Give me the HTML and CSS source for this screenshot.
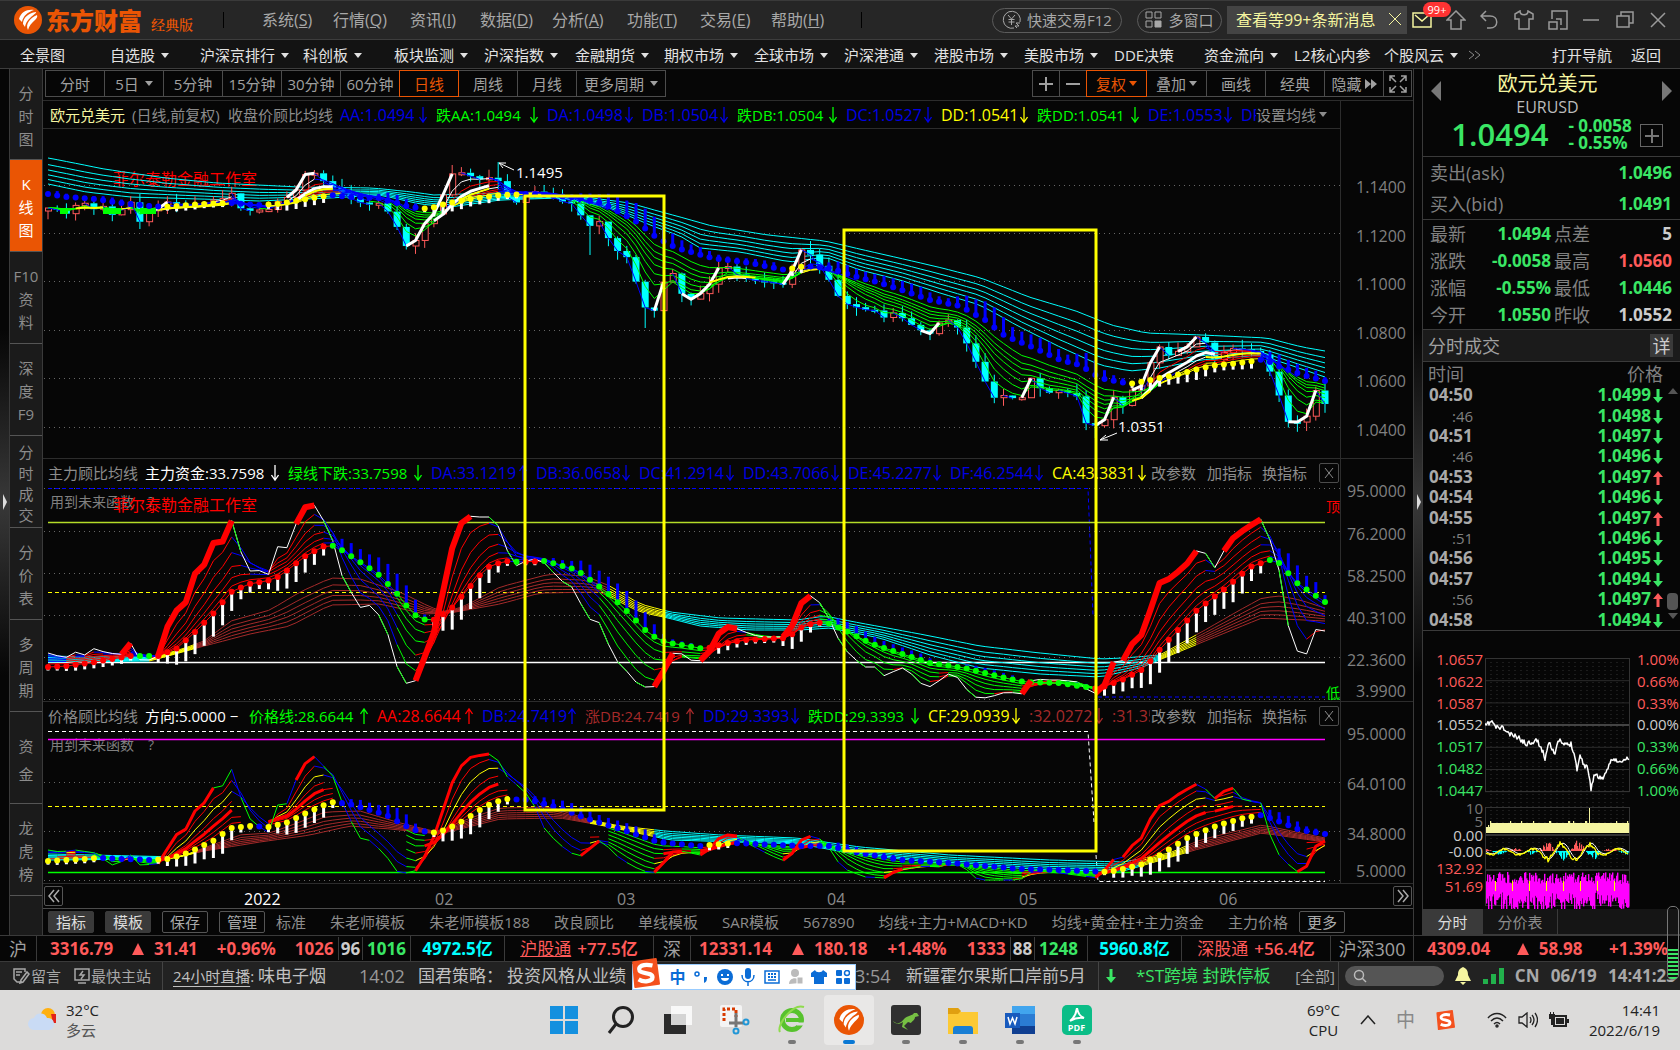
FILE: index.html
```html
<!DOCTYPE html>
<html lang="zh-CN">
<head>
<meta charset="utf-8">
<title>东方财富 经典版</title>
<link rel="stylesheet" href="styles.css">
</head>
<body>
<svg class="defs" aria-hidden="true">
  <symbol id="em" viewBox="0 0 28 28"><circle cx="14" cy="14" r="14" fill="#ea5504"/><path d="M5 13C7 6 13 3 20 4c-6 2-11 6-12 12zM9 18c0-6 5-11 13-12 1 2-9 5-11 15zM14 24c-3-6 2-12 9-15 2 4-7 7-9 15z" fill="#fff"/></symbol>
  <symbol id="dn" viewBox="0 0 8 16"><path d="M4 0v15M0.500 10L4 15L7.500 10" fill="none" stroke="currentColor" stroke-width="1.300"/></symbol>
  <symbol id="up" viewBox="0 0 8 16"><path d="M4 16V1M0.500 6L4 1L7.500 6" fill="none" stroke="currentColor" stroke-width="1.300"/></symbol>
  <symbol id="bdn" viewBox="0 0 10 14"><path d="M3.500 0h3v8H10L5 14L0 8h3.500z" fill="#3ae665"/></symbol>
  <symbol id="bup" viewBox="0 0 10 14"><path d="M3.500 14h3V6H10L5 0L0 6h3.500z" fill="#ff5a5a"/></symbol>
  <symbol id="sg" viewBox="0 0 28 28"><path d="M3 4L24 1L27 24L5 27Z" fill="#f4511e" stroke="#f4511e" stroke-width="2" stroke-linejoin="round"/><path d="M21 7C12 5 7 8 9 12c2 3 12 1 12 6 0 4-8 5-13 2" fill="none" stroke="#fff" stroke-width="4"/></symbol>
</svg>

<header class="titlebar">
  <div class="brand"><svg class="brand-logo"><use href="#em"/></svg><b>东方财富</b><span>经典版</span></div>
  <i class="sep"></i>
  <nav class="menus">
    <button>系统(<u>S</u>)</button><button>行情(<u>Q</u>)</button><button>资讯(<u>I</u>)</button><button>数据(<u>D</u>)</button><button>分析(<u>A</u>)</button><button>功能(<u>T</u>)</button><button>交易(<u>E</u>)</button><button>帮助(<u>H</u>)</button>
  </nav>
  <i class="sep"></i>
  <div class="title-tools">
    <button class="pill pill-trade"><svg width="20" height="20" viewBox="0 0 20 20" fill="none" stroke="currentColor"><path d="M12 18A8.500 8.500 0 1 1 18 12M6 5l3.500 4L13 5M9.500 9v6M6.500 9.500h6M6.500 12h6M18 13h-4l3 3h-4l2 2"/></svg>快速交易F12</button>
    <button class="pill pill-win"><svg width="18" height="18" viewBox="0 0 18 18" fill="none" stroke="currentColor"><path d="M1 1h6v6H1zM10 1h6v6h-6zM1 10h6v6H1z"/><path d="M10 10h6v6h-6z" fill="currentColor"/></svg>多窗口</button>
    <div class="notice"><span>查看等99+条新消息</span><button aria-label="关闭消息"><svg width="14" height="14" viewBox="0 0 14 14" stroke="currentColor"><path d="M1 1l12 12M13 1L1 13"/></svg></button></div>
    <div class="title-icons">
      <button class="mail" aria-label="邮件"><svg width="20" height="18" viewBox="0 0 20 18" fill="none" stroke="#f5f5a0" stroke-width="1.500"><path d="M1 2h18v14H1zM3 4l7 6 7-6"/></svg><span class="badge">99+</span></button>
      <button aria-label="主页"><svg width="20" height="20" viewBox="0 0 20 20"><path d="M10 1L1 10h4v9h10v-9h4z"/></svg></button>
      <button aria-label="后退"><svg width="18" height="20" viewBox="0 0 18 20"><path d="M6 1L1 6l5 5M1 6h9c9 0 9 12 0 12H7"/></svg></button>
      <button aria-label="皮肤"><svg width="20" height="20" viewBox="0 0 20 20"><path d="M6 1L1 4v5h4v10h10V9h4V4l-5-3c0 5-8 5-8 0z"/></svg></button>
      <button aria-label="小窗"><svg width="20" height="20" viewBox="0 0 20 20"><path d="M4 9V1h15v18h-7M1 12h8v7H1zM8 9h5v6"/></svg></button>
      <button aria-label="最小化"><svg width="18" height="20" viewBox="0 0 18 20"><path d="M1 10h16"/></svg></button>
      <button aria-label="还原"><svg width="18" height="18" viewBox="0 0 18 18"><path d="M1 5h12v11H1zM5 5V1h12v11h-4"/></svg></button>
      <button aria-label="关闭"><svg width="16" height="16" viewBox="0 0 16 16"><path d="M1 1l14 14M15 1L1 15"/></svg></button>
    </div>
  </div>
</header>

<nav class="mainnav">
  <a href="#">全景图</a><a href="#" class="car">自选股</a><a href="#" class="car">沪深京排行</a><a href="#" class="car">科创板</a><a href="#" class="car">板块监测</a><a href="#" class="car">沪深指数</a><a href="#" class="car">金融期货</a><a href="#" class="car">期权市场</a><a href="#" class="car">全球市场</a><a href="#" class="car">沪深港通</a><a href="#" class="car">港股市场</a><a href="#" class="car">美股市场</a><a href="#">DDE决策</a><a href="#" class="car">资金流向</a><a href="#">L2核心内参</a><a href="#" class="car">个股风云</a><a href="#" class="dim" aria-label="更多"><svg width="13" height="10" viewBox="0 0 13 10" fill="none" stroke="currentColor"><path d="M1 1l5 4-5 4M7 1l5 4-5 4"/></svg></a><span></span><a href="#">打开导航</a><a href="#">返回</a>
</nav>

<main class="workspace">
  <div class="gutter"><i></i></div>
  <nav class="side">
    <a href="#">分<br>时<br>图</a><a href="#" class="on">K<br>线<br>图</a><a href="#">F10<br>资<br>料</a><a href="#">深<br>度<br>F9</a><a href="#" class="four">分<br>时<br>成<br>交</a><a href="#">分<br>价<br>表</a><a href="#">多<br>周<br>期</a><a href="#" class="two">资<br>金</a><a href="#">龙<br>虎<br>榜</a>
  </nav>

  <section class="charts">
    <div class="toolbar">
      <div class="group">
        <button>分时</button><button class="car">5日</button><button>5分钟</button><button>15分钟</button><button>30分钟</button><button>60分钟</button><button class="on">日线</button><button>周线</button><button>月线</button><button class="car wide">更多周期</button>
      </div>
      <div class="group right">
        <button aria-label="放大"><svg width="16" height="16" viewBox="0 0 16 16"><path d="M8 1v14M1 8h14" stroke="currentColor" stroke-width="2"/></svg></button><button aria-label="缩小"><svg width="16" height="16" viewBox="0 0 16 16"><path d="M1 8h14" stroke="currentColor" stroke-width="2"/></svg></button><button class="on car">复权</button><button class="car">叠加</button><button>画线</button><button>经典</button><button>隐藏<svg width="12" height="10" viewBox="0 0 12 10"><path d="M0 0l6 5-6 5zM6 0l6 5-6 5z" fill="currentColor"/></svg></button><button aria-label="全屏"><svg width="18" height="18" viewBox="0 0 18 18" fill="none" stroke="currentColor" stroke-width="1.500"><path d="M1 6V1h5M12 1h5v5M17 12v5h-5M6 17H1v-5M1 1l6 6M17 1l-6 6M17 17l-6-6M1 17l6-6"/></svg></button>
      </div>
    </div>

    <section class="panel">
      <div class="plotcol">
        <div class="head line">
          <div class="readout r1"><span class="c-pale">欧元兑美元</span><span>(日线,前复权)</span><span>收盘价顾比均线</span><span class="c-blue n">AA:1.0494<svg><use href="#dn"/></svg></span><span class="c-green">跌AA:1.0494<svg><use href="#dn"/></svg></span><span class="c-blue n">DA:1.0498<svg><use href="#dn"/></svg></span><span class="c-blue n">DB:1.0504<svg><use href="#dn"/></svg></span><span class="c-green">跌DB:1.0504<svg><use href="#dn"/></svg></span><span class="c-blue n">DC:1.0527<svg><use href="#dn"/></svg></span><span class="c-yellow n">DD:1.0541<svg><use href="#dn"/></svg></span><span class="c-green">跌DD:1.0541<svg><use href="#dn"/></svg></span><span class="c-blue n">DE:1.0553<svg><use href="#dn"/></svg></span><span class="c-blue n">DF</span></div>
          <button class="car setma">设置均线</button>
        </div>
        <svg class="plot" id="plot-price"></svg>
      </div>
      <ol class="axis a1"><li>1.1400</li><li>1.1200</li><li>1.1000</li><li>1.0800</li><li>1.0600</li><li>1.0400</li></ol>
    </section>

    <section class="panel">
      <div class="plotcol">
        <div class="head">
          <div class="readout r2"><span>主力顾比均线</span><span class="c-white">主力资金:33.7598<svg><use href="#dn"/></svg></span><span class="c-green">绿线下跌:33.7598<svg><use href="#dn"/></svg></span><span class="c-blue n">DA:33.1219<svg><use href="#up"/></svg></span><span class="c-blue n">DB:36.0658<svg><use href="#dn"/></svg></span><span class="c-blue n">DC:41.2914<svg><use href="#dn"/></svg></span><span class="c-blue n">DD:43.7066<svg><use href="#dn"/></svg></span><span class="c-blue n">DE:45.2277<svg><use href="#dn"/></svg></span><span class="c-blue n">DF:46.2544<svg><use href="#dn"/></svg></span><span class="c-yellow n">CA:43.3831<svg><use href="#dn"/></svg></span></div>
          <div class="acts"><button>改参数</button><button>加指标</button><button>换指标</button><button class="x" aria-label="关闭"><svg width="10" height="12" viewBox="0 0 10 12" stroke="currentColor"><path d="M1 1l8 10M9 1L1 11"/></svg></button></div>
        </div>
        <svg class="plot" id="plot-main"></svg>
      </div>
      <ol class="axis a2"><li>95.0000</li><li>76.2000</li><li>58.2500</li><li>40.3100</li><li>22.3600</li><li>3.9900</li></ol>
    </section>

    <section class="panel">
      <div class="plotcol">
        <div class="head">
          <div class="readout r3"><span>价格顾比均线</span><span class="c-white">方向:5.0000 −</span><span class="c-green">价格线:28.6644<svg><use href="#up"/></svg></span><span class="c-red n">AA:28.6644<svg><use href="#up"/></svg></span><span class="c-blue n">DB:24.7419<svg><use href="#up"/></svg></span><span class="c-brown">涨DB:24.7419<svg><use href="#up"/></svg></span><span class="c-blue n">DD:29.3393<svg><use href="#dn"/></svg></span><span class="c-green">跌DD:29.3393<svg><use href="#dn"/></svg></span><span class="c-yellow n">CF:29.0939<svg><use href="#dn"/></svg></span><span class="c-brown n">:32.0272<svg><use href="#dn"/></svg></span><span class="c-brown n">:31.35</span></div>
          <div class="acts"><button>改参数</button><button>加指标</button><button>换指标</button><button class="x" aria-label="关闭"><svg width="10" height="12" viewBox="0 0 10 12" stroke="currentColor"><path d="M1 1l8 10M9 1L1 11"/></svg></button></div>
        </div>
        <svg class="plot" id="plot-value"></svg>
      </div>
      <ol class="axis a3"><li>95.0000</li><li>64.0100</li><li>34.8000</li><li>5.0000</li></ol>
    </section>

    <div class="timeline">
      <button aria-label="向前"><svg width="14" height="14" viewBox="0 0 14 14"><path d="M7 1L2 7l5 6M12 1L7 7l5 6" fill="none" stroke="currentColor" stroke-width="1.500"/></svg></button>
      <ol><li class="c-white">2022</li><li>02</li><li>03</li><li>04</li><li>05</li><li>06</li></ol>
      <button aria-label="向后"><svg width="14" height="14" viewBox="0 0 14 14"><path d="M2 1l5 6-5 6M7 1l5 6-5 6" fill="none" stroke="currentColor" stroke-width="1.500"/></svg></button>
    </div>

    <div class="templates">
      <div class="boxes"><button class="fill">指标</button><button class="fill">模板</button><button>保存</button><button>管理</button></div>
      <div class="names"><button>标准</button><button>朱老师模板</button><button>朱老师模板188</button><button>改良顾比</button><button>单线模板</button><button>SAR模板</button><button>567890</button><button>均线+主力+MACD+KD</button><button>均线+黄金柱+主力资金</button><button>主力价格</button></div>
      <div class="boxes"><button>更多</button></div>
    </div>
    <svg class="marks" id="marks"></svg>
  </section>

  <div class="gutter right"><i></i></div>

  <aside class="quote">
    <div class="q-head">
      <button class="tri-l" aria-label="上一个"></button>
      <div class="q-mid">
        <h1>欧元兑美元</h1><p>EURUSD</p>
        <div class="q-price"><strong>1.0494</strong><span>- 0.0058<br>- 0.55%</span></div>
      </div>
      <div class="q-side"><button class="tri-r" aria-label="下一个"></button><button class="plus" aria-label="添加"><svg width="14" height="14" viewBox="0 0 14 14"><path d="M7 0v14M0 7h14" stroke="#777" stroke-width="2"/></svg></button></div>
    </div>
    <dl class="ask"><dt>卖出(ask)</dt><dd class="g">1.0496</dd><dt>买入(bid)</dt><dd class="g">1.0491</dd></dl>
    <dl class="stats"><dt>最新</dt><dd class="g">1.0494</dd><dt>点差</dt><dd>5</dd><dt>涨跌</dt><dd class="g">-0.0058</dd><dt>最高</dt><dd class="r">1.0560</dd><dt>涨幅</dt><dd class="g">-0.55%</dd><dt>最低</dt><dd class="g">1.0446</dd><dt>今开</dt><dd class="g">1.0550</dd><dt>昨收</dt><dd>1.0552</dd></dl>
    <div class="q-title"><h2>分时成交</h2><button>详</button></div>
    <div class="ticks">
      <table>
        <thead><tr><th>时间</th><th>价格</th></tr></thead>
        <tbody>
          <tr><td>04:50</td><td>1.0499<svg><use href="#bdn"/></svg></td></tr>
          <tr><td class="s">:46</td><td>1.0498<svg><use href="#bdn"/></svg></td></tr>
          <tr><td>04:51</td><td>1.0497<svg><use href="#bdn"/></svg></td></tr>
          <tr><td class="s">:46</td><td>1.0496<svg><use href="#bdn"/></svg></td></tr>
          <tr><td>04:53</td><td>1.0497<svg><use href="#bup"/></svg></td></tr>
          <tr><td>04:54</td><td>1.0496<svg><use href="#bdn"/></svg></td></tr>
          <tr><td>04:55</td><td>1.0497<svg><use href="#bup"/></svg></td></tr>
          <tr><td class="s">:51</td><td>1.0496<svg><use href="#bdn"/></svg></td></tr>
          <tr><td>04:56</td><td>1.0495<svg><use href="#bdn"/></svg></td></tr>
          <tr><td>04:57</td><td>1.0494<svg><use href="#bdn"/></svg></td></tr>
          <tr><td class="s">:56</td><td>1.0497<svg><use href="#bup"/></svg></td></tr>
          <tr><td>04:58</td><td>1.0494<svg><use href="#bdn"/></svg></td></tr>
        </tbody>
      </table>
      <div class="bar"><i class="bu"></i><span></span><i class="bt"></i><i class="bd"></i></div>
    </div>
    <div class="mini">
      <ol><li class="r">1.0657</li><li class="r">1.0622</li><li class="r">1.0587</li><li>1.0552</li><li class="g">1.0517</li><li class="g">1.0482</li><li class="g">1.0447</li><li class="d">10</li><li class="d">5</li><li>0.00</li><li>-0.00</li><li class="r">132.92</li><li class="r">51.69</li></ol>
      <svg id="plot-mini"></svg>
      <ol class="pct"><li class="r">1.00%</li><li class="r">0.66%</li><li class="r">0.33%</li><li>0.00%</li><li class="g">0.33%</li><li class="g">0.66%</li><li class="g">1.00%</li></ol>
    </div>
    <div class="q-tabs"><button class="on">分时</button><button>分价表</button><i class="meter"></i></div>
  </aside>
</main>

<section class="ticker">
  <div class="lab">沪</div>
  <div class="idx"><b>3316.79</b><b class="tri">31.41</b><b>+0.96%</b><b class="cnt">1026<i>96</i><em>1016</em></b></div>
  <div class="amt">4972.5亿</div>
  <div class="net"><u>沪股通</u> <b>+77.5亿</b></div>
  <div class="lab">深</div>
  <div class="idx"><b>12331.14</b><b class="tri">180.18</b><b>+1.48%</b><b class="cnt">1333<i>88</i><em>1248</em></b></div>
  <div class="amt">5960.8亿</div>
  <div class="net">深股通 <b>+56.4亿</b></div>
  <div class="lab">沪深300</div>
  <div class="idx"><b>4309.04</b><b class="tri">58.98</b><b>+1.39%</b></div>
</section>

<section class="status">
  <div class="tools">
    <button><svg width="17" height="16" viewBox="0 0 17 16" fill="none" stroke="currentColor" stroke-width="1.500"><path d="M9 14H4L1 11V1h11v3M3 4h6M3 7h4M8 12l6-8 2 2-6 8-3 1z"/></svg>留言</button>
    <button><svg width="16" height="16" viewBox="0 0 16 16" fill="none" stroke="currentColor" stroke-width="1.500"><path d="M1 1h14v11H1zM4 15h8M9 3L6 7h4l-3 4"/></svg>最快主站</button>
  </div>
  <div class="news">
    <span class="live"><a href="#">24小时直播</a>:</span><span class="cut"><a href="#">味电子烟</a></span><time>14:02</time><a href="#">国君策略：</a><a href="#" class="lead">投资风格从业绩</a><time class="late">3:54</time><a href="#">新疆霍尔果斯口岸前5月</a>
  </div>
  <div class="alert"><svg width="10" height="16"><use href="#bdn"/></svg><a href="#">*ST跨境 封跌停板</a><button>[全部]</button></div>
  <div class="sys">
    <label class="find"><svg width="14" height="14" viewBox="0 0 14 14" fill="none" stroke="#bbb" stroke-width="1.500"><circle cx="6" cy="6" r="4.500"/><path d="M9 9l4 4"/></svg><input type="text" aria-label="搜索"></label>
    <svg width="16" height="18" viewBox="0 0 16 18"><path d="M8 0c4 2 5 4 5 8l3 6H0l3-6c0-4 1-6 5-8zM5 15h6l-3 3z" fill="#f5f5a0"/></svg>
    <svg width="21" height="16" viewBox="0 0 21 16" fill="#22b14c"><path d="M0 11h5v5H0zM8 6h5v10H8zM16 0h5v16h-5z"/></svg>
    <b>CN</b><b>06/19</b><b>14:41:23</b>
  </div>
  <div class="ime">
    <svg width="32" height="30"><use href="#sg"/></svg><b>中</b>
    <svg width="14" height="16" viewBox="0 0 14 16"><circle cx="3" cy="5" r="2" fill="none" stroke="currentColor" stroke-width="1.500"/><path d="M10 8h3c0 4-1 5-3 6z" fill="currentColor"/></svg>
    <svg width="16" height="16" viewBox="0 0 16 16"><circle cx="8" cy="8" r="8" fill="currentColor"/><path d="M4 5h2v2H4zM10 5h2v2h-2zM4 9h8c0 4-8 4-8 0z" fill="#fff"/></svg>
    <svg width="14" height="18" viewBox="0 0 14 18"><rect x="4" width="6" height="11" rx="3" fill="currentColor"/><path d="M1 7c0 9 12 9 12 0M7 14v4" fill="none" stroke="currentColor" stroke-width="1.500"/></svg>
    <svg width="16" height="14" viewBox="0 0 16 14" fill="none" stroke="currentColor" stroke-width="1.500"><path d="M1 1h14v12H1zM4 10h8"/><path d="M4 4h9M4 7h9" stroke-dasharray="2 1" stroke-width="2"/></svg>
    <svg width="14" height="16" viewBox="0 0 14 16" fill="#bbb"><circle cx="6" cy="4" r="4"/><path d="M0 15c0-7 10-8 11-1z"/><path d="M8 8h6v7H8z" stroke="#fff"/></svg>
    <svg width="16" height="14" viewBox="0 0 16 14" fill="currentColor"><path d="M4 0L0 3v4h3v7h10V7h3V3l-4-3c-1 3-7 3-8 0z"/></svg>
    <svg width="14" height="14" viewBox="0 0 14 14" fill="currentColor"><rect width="6" height="6" rx="1"/><circle cx="11" cy="3" r="2.500" fill="none" stroke="currentColor" stroke-width="1.500"/><rect y="8" width="6" height="6" rx="1"/><rect x="8" y="8" width="6" height="6" rx="1"/></svg>
  </div>
</section>

<footer class="taskbar">
  <div class="weather">
    <svg width="30" height="24" viewBox="0 0 30 24"><circle cx="21" cy="7" r="7" fill="#ffb010"/><path d="M24 6h5v9h-3z" fill="#e2231a"/><path d="M7 22a6 6 0 0 1 0-12 7 7 0 0 1 13 0 6 6 0 0 1 2 12z" fill="#c9dbf5"/></svg>
    <p>32°C<br><span>多云</span></p>
  </div>
  <div class="apps">
    <button aria-label="开始"><svg width="28" height="28" viewBox="0 0 28 28"><path d="M0 0h13v13H0zM15 0h13v13H15zM0 15h13v13H0zM15 15h13v13H15z" fill="#1490df"/></svg></button>
    <button aria-label="搜索"><svg width="28" height="28" viewBox="0 0 28 28" fill="none" stroke="#222" stroke-width="3"><circle cx="16" cy="11" r="9.500"/><path d="M9 18l-7 9"/></svg></button>
    <button aria-label="任务视图"><svg width="30" height="28" viewBox="0 0 30 28"><path d="M1 8h22v20H1z" fill="#2b2b2b"/><path d="M8 0h21v19H8z" fill="#fff" fill-opacity=".8"/></svg></button>
    <button aria-label="截图"><svg width="30" height="30" viewBox="0 0 30 30" fill="none"><rect width="22" height="22" rx="2" fill="#f4f4f4"/><path d="M4 16V4h12v8" stroke="#d83b01" stroke-width="3" stroke-dasharray="3 2"/><path d="M9 18h14M16 8v14" stroke="#777" stroke-width="3"/><circle cx="26" cy="17" r="2.500" stroke="#2196d6" stroke-width="2"/><circle cx="16" cy="26" r="2.500" stroke="#2196d6" stroke-width="2"/></svg></button>
    <button class="run" aria-label="浏览器"><svg width="28" height="30" viewBox="0 0 28 30" fill="none"><circle cx="14" cy="15" r="9.500" stroke="#57c22d" stroke-width="5"/><path d="M8 15h15" stroke="#57c22d" stroke-width="4"/><path d="M19 19h8" stroke="#dcdcdc" stroke-width="3"/><path d="M2 27C-2 20 15-2 26 2" stroke="#8fdb4c" stroke-width="2"/></svg></button>
    <button class="run active" aria-label="东方财富"><svg width="30" height="30"><use href="#em"/></svg></button>
    <button class="run" aria-label="袋鼠"><svg width="30" height="30" viewBox="0 0 30 30"><rect width="30" height="30" rx="3" fill="#303030"/><path d="M2 16c6 5 8 1 12-3 4-3 7-2 9-5l3 0 2 3-4 1c0 3-3 4-4 6l-3-1-4 4 4 4-6-3 1-5c-4 3-8 2-10-1z" fill="#76c043"/></svg></button>
    <button class="run" aria-label="文件夹"><svg width="30" height="28" viewBox="0 0 30 28"><path d="M0 2h10l3 4h17v22H0z" fill="#fcc934"/><path d="M0 2h10l3 3-3 3H0z" fill="#e0a010"/><path d="M5 28v-5q0-3 3-3h14q3 0 3 3v5z" fill="#1a7fd4"/></svg></button>
    <button class="run" aria-label="Word"><svg width="30" height="28" viewBox="0 0 30 28"><path d="M7 0h23v28H7z" fill="#2b7cd3"/><path d="M7 0h23v8H7z" fill="#41a5ee"/><path d="M7 20h23v8H7z" fill="#103f91"/><path d="M0 7h15v15H0z" fill="#185abd"/><path d="M3 11l2 7 2.500-6 2.500 6 2-7" fill="none" stroke="#fff" stroke-width="1.500"/></svg></button>
    <button class="run pdf" aria-label="PDF"><svg width="16" height="14" viewBox="0 0 16 14" fill="none" stroke="#fff" stroke-width="2"><path d="M8 0c1 6 3 8 7 10-5-1-9 0-14 3 4-3 6-6 7-13z"/></svg><span>PDF</span></button>
  </div>
  <div class="tray">
    <p class="temp">69°C<br>CPU</p>
    <svg width="16" height="10" viewBox="0 0 16 10" fill="none" stroke="#222" stroke-width="1.500"><path d="M1 9l7-8 7 8"/></svg>
    <span class="zh">中</span>
    <svg width="20" height="20"><use href="#sg"/></svg>
    <div class="net3">
      <svg width="20" height="16" viewBox="0 0 20 16" fill="none" stroke="#222" stroke-width="1.500"><path d="M1 6c5-6 13-6 18 0M4 9c4-4 8-4 12 0M7 12c2-2 4-2 6 0"/><circle cx="10" cy="14" r="1"/></svg>
      <svg width="20" height="16" viewBox="0 0 20 16" fill="none" stroke="#222" stroke-width="1.300"><path d="M1 5h3l5-4v14l-5-4H1zM12 5q2 3 0 6M14 3q4 5 0 10M17 1q5 7 0 14"/></svg>
      <svg width="20" height="16" viewBox="0 0 20 16"><path d="M5 4h12v10H5z" fill="none" stroke="#222" stroke-width="2"/><path d="M7 6h8v6H7zM18 7h2v4h-2zM0 2h6v5H0zM1 0h1v2H1zM4 0h1v2H4zM2 7h2v6H2z" fill="#222"/></svg>
    </div>
    <p class="clock">14:41<br>2022/6/19</p>
  </div>
</footer>
<script src="charts.js"></script>
</body>
</html>
```
FILE: styles.css
```css
*{box-sizing:border-box}
body{margin:0;height:100vh;min-height:980px;display:grid;grid-template-columns:minmax(0,1fr);grid-template-rows:40px 29px minmax(0,1fr) 27px 28px 60px;background:#060606;color:#8c8c8c;font:15px/20px "Open Sans","Noto Sans CJK SC",sans-serif;overflow-x:hidden;white-space:nowrap}
button{font:inherit;color:inherit;background:none;border:0;padding:0;margin:0;white-space:nowrap}
a{color:inherit;text-decoration:none}
ol,dl,p,h1,h2,dd{margin:0;padding:0;list-style:none}
i,em{font-style:normal}
svg{flex:none}
.defs{position:absolute;width:0;height:0}
.c-pale{color:#f5f5a0}.c-blue{color:#0000e6}.c-green{color:#00ff00}.c-yellow{color:#ffff00}.c-white{color:#fff}.c-red{color:#ff0000}.c-brown{color:#a52a2a}
.g{color:#3ae665}.r{color:#ff5a5a}.d{color:#777}
.car::after{content:"";border:4px solid transparent;border-top:5px solid currentColor;border-bottom:0}

.titlebar{display:flex;align-items:center;background:#262626;border-top:1px solid #3a3a3a;border-bottom:1px solid #3d3d3d;color:#a8a8a8}
.brand{display:flex;align-items:center;width:223px;padding-left:14px;color:#ea5504}
.brand-logo{width:28px;height:28px}
.brand b{font:900 24px/30px "Noto Sans CJK SC",sans-serif;margin-left:4px}
.brand span{font:600 14px/20px "Noto Serif CJK SC","Noto Sans CJK SC",serif;margin:8px 0 0 9px}
.sep{width:1px;height:16px;background:#000}
.menus{display:grid;grid-template-columns:71px 77px 70px 72px 75px 73px 71px 90px;padding-left:38px;font-size:16px}
.menus button{text-align:left}
.title-tools{flex:1;display:flex;align-items:center;justify-content:flex-end}
.pill{height:25px;border:1px solid #5c5c5c;border-radius:13px;display:flex;align-items:center;justify-content:center;gap:5px}
.pill-trade{width:130px;margin-right:15px}
.pill-win{width:85px;margin-right:5px}
.notice{width:180px;height:28px;background:#444;color:#f5f5a0;display:flex;align-items:center;justify-content:space-between;padding:0 5px 0 9px;font-size:16px}
.title-icons{display:grid;grid-template-columns:repeat(8,34px);width:273px;align-items:center;padding-left:5px}
.title-icons button{display:flex;align-items:center}
.title-icons button:not(.mail) svg{fill:none;stroke:#9a9a9a;stroke-width:1.5}
.mail{position:relative}
.badge{position:absolute;left:11px;top:-9px;width:28px;height:15px;border-radius:8px;background:#f33;color:#fff;font-size:11px;line-height:15px;text-align:center}

.mainnav{display:grid;grid-template-columns:90px 90px 103px 91px 90px 91px 89px 90px 90px 90px 90px 90px 90px 90px 90px 84px 24px 1fr 79px 49px;align-items:center;background:#131313;border-bottom:1px solid #3d3d3d;padding:2px 0 0 20px;color:#e2e2e2}
.mainnav a{display:flex;align-items:center;gap:6px}
.mainnav .dim{color:#888}

.workspace{display:grid;grid-template-columns:10px 33px minmax(0,1fr) 10px 257px;grid-template-rows:minmax(0,1fr);min-height:0}
.gutter{background:linear-gradient(#060606 30%,#383838 50%,#060606 70%);display:flex;align-items:center;border-right:1px solid #3a3a3a}
.gutter i{margin-left:3px;border:8px solid transparent;border-left:4px solid #ddd;border-right:0}
.gutter.right{border-left:1px solid #3a3a3a}
.side{background:#1b1b1b;border-right:1px solid #3a3a3a;display:grid;grid-template-rows:91px repeat(8,92px) 1fr;text-align:center;line-height:23px}
.side a{display:flex;align-items:center;justify-content:center;border-bottom:1px solid #555;padding-top:4px}
.side .on{background:#ea5504;color:#fff}
.side .four{line-height:21px}
.side .two{line-height:28px}

.charts{position:relative;display:grid;grid-template-columns:minmax(0,1fr);grid-template-rows:32px minmax(0,358fr) minmax(0,243fr) minmax(0,182fr) 25px 26px}
.toolbar{display:flex;justify-content:space-between;padding:1px 1px 3px 3px;border-bottom:1px solid #2c2c2c}
.group{display:grid;grid-template-columns:repeat(9,59px) 89px;color:#a0a0a0}
.group.right{grid-template-columns:27px 27px 60px 60px 59px 59px 59px 28px}
.group button{border:1px solid #4c4c4c;margin-left:-1px;display:flex;align-items:center;justify-content:center;gap:6px}
.group .on{border-color:#ea5504;color:#ea5504;position:relative}
.group.right button{gap:3px}
.panel{display:grid;grid-template-columns:minmax(0,1fr) 73px;grid-template-rows:minmax(0,1fr);border-bottom:1px solid #2c2c2c;min-height:0}
.plotcol{display:grid;grid-template-columns:minmax(0,1fr);grid-template-rows:28px minmax(0,1fr);min-width:0;min-height:0}
.head{display:flex;align-items:center;padding-left:5px;min-width:0}
.head.line{border-bottom:1px solid #2c2c2c;padding-left:7px}
.readout{flex:1;min-width:0;overflow:hidden;display:grid;align-items:center}
.readout span{display:flex;align-items:center;justify-content:space-between;padding-right:9px}
.readout .n{font-size:16px}
.readout svg{width:8px;height:18px}
.r1{grid-template-columns:82px 96px 112px 96px 111px 95px 95px 109px 95px 96px 111px 93px 1fr}
.r2{grid-template-columns:97px 143px 143px 105px 103px 104px 105px 102px 102px 98px}
.r2 span:last-child{padding-right:4px}
.r3{grid-template-columns:97px 104px 128px 105px 103px 118px 105px 120px 101px 83px 1fr}
.setma{display:flex;align-items:center;gap:3px;width:84px}
.acts{display:grid;grid-template-columns:56px 55px 57px 20px;padding:0 1px}
.acts button{text-align:left}
.acts .x{height:20px;border:1px solid #4c4c4c;border-radius:2px;display:flex;align-items:center;justify-content:center}
.plot{display:block;width:100%;height:100%;min-height:0}
.axis{display:grid;border-left:1px solid #2c2c2c;font-size:16px;align-items:center;padding-right:7px;text-align:right;color:#808080}
.a1{padding:62px 7px 4px 0;grid-template-rows:repeat(6,1fr)}
.a2{padding-top:10px;grid-template-rows:43fr 43fr 42fr 42fr 42fr 20fr}
.a3{padding-top:6px;grid-template-rows:51fr 50fr 49fr 25fr}
.timeline{display:flex;align-items:center;justify-content:space-between;border-bottom:1px solid #4c4c4c;padding:0 1px}
.timeline ol{flex:1;display:grid;grid-template-columns:191fr 182fr 210fr 192fr 200fr 174fr;padding-left:181px;padding-top:6px;font-size:16px;line-height:20px}
.timeline button{width:19px;height:20px;border:1px solid #555;border-radius:2px;display:flex;align-items:center;justify-content:center;color:#aaa}
.templates{display:flex;align-items:center;gap:11px;padding-left:5px}
.boxes{display:flex;gap:11px}
.boxes button{width:46px;height:22px;line-height:20px;border:1px solid #555;border-radius:2px;color:#aaa}
.boxes .fill{background:#3a3a3a;border-color:#3a3a3a;color:#ddd}
.names{display:flex;width:1012px;justify-content:space-between}
.marks{position:absolute;left:0;top:0;width:100%;height:100%;pointer-events:none}

.quote{display:grid;grid-template-columns:minmax(0,1fr);grid-template-rows:88px 63px 110px 32px 269px minmax(0,1fr) 26px}
.q-head{display:grid;grid-template-columns:18px 1fr 40px;padding:2px 6px 0 8px;border-bottom:1px solid #3a3a3a;align-items:start}
.tri-l,.tri-r{width:10px;height:20px;border:10px solid transparent;border-right:10px solid #777;border-left:0;margin-top:10px}
.tri-r{border-left:10px solid #777;border-right:0;margin-left:28px}
.q-mid{display:grid;justify-items:center}
.q-mid h1{font-size:20px;font-weight:400;line-height:26px;color:#f5f5a0;margin-left:12px}
.q-mid p{font-size:16px;line-height:20px;color:#bbb;margin-left:12px}
.q-price{display:flex;align-items:center;gap:20px;color:#3ae665;height:34px}
.q-price strong{font-size:31px;font-weight:600;line-height:34px}
.q-price span{font-size:17px;font-weight:700;line-height:17px}
.q-side{display:grid}
.plus{width:23px;height:23px;border:1px solid #666;margin:23px 0 0 6px;display:flex;align-items:center;justify-content:center}
.ask,.stats{display:grid;font-size:18px;border-bottom:1px solid #3a3a3a;align-items:center;color:#808080}
.ask{grid-template-columns:1fr 1fr;padding:0 8px 0 7px}
.stats{grid-template-columns:44px 77px 44px 1fr;padding:0 8px 0 7px}
.stats dt:nth-of-type(even){padding-left:3px}
.quote dd{font-size:17px;font-weight:700;text-align:right}
.stats dd:not(.g):not(.r){color:#ccc}
.q-title{background:#1b1b1b;border-bottom:1px solid #3a3a3a;display:flex;align-items:center;justify-content:space-between;padding:0 7px 0 5px}
.q-title h2{font-size:18px;font-weight:400;color:#a0a0a0}
.q-title button{font-size:18px;width:23px;height:23px;line-height:22px;background:#3a3a3a;color:#ccc}
.ticks{display:grid;grid-template-columns:1fr 17px;border-bottom:1px solid #3a3a3a}
.ticks table{border-collapse:collapse;width:100%;height:268px}
.ticks th{font-size:18px;font-weight:400;text-align:left;padding:0 0 0 5px;line-height:22px;height:23px;color:#808080}
.ticks th:last-child{text-align:right}
.ticks td{padding:0 0 0 6px;font-size:17px;font-weight:700;color:#aaa;line-height:20px}
.ticks td:last-child{text-align:right;color:#3ae665}
.ticks td.s{font-weight:400;font-size:15px;color:#808080;padding-left:29px}
.ticks td svg{width:10px;height:14px;margin-left:2px;vertical-align:-2px}
.bar{display:grid;grid-template-rows:7px 1fr 17px 20px;padding:25px 2px 0 4px;justify-items:center}
.bu{border:5px solid transparent;border-bottom:6px solid #555;border-top:0}
.bt{width:11px;background:#555;border-radius:4px}
.bd{border:5px solid transparent;border-top:6px solid #555;border-bottom:0;align-self:start;margin-top:3px}
.mini{display:grid;grid-template-columns:60px 146px 46px;grid-template-rows:minmax(0,1fr);column-gap:2px}
.mini ol{display:grid;grid-template-rows:repeat(7,22fr) 14fr 13fr 15fr 17fr 18fr 17fr 15fr;padding-top:17px;text-align:right;color:#ccc;align-items:center;line-height:12px}
.mini svg{width:100%;height:100%}
.mini .d{color:#777}.mini .r{color:#ff5a5a}.mini .g{color:#3ae665}
.q-tabs{display:flex;background:#151515;border-bottom:1px solid #3a3a3a;position:relative}
.q-tabs button{width:75px;border-right:1px solid #3a3a3a}
.q-tabs .on{width:60px;background:#3a3a3a;color:#ddd}
.meter{position:absolute;right:1px;top:-3px;z-index:2;width:12px;height:74px;border:1px solid #777;border-radius:5px;background:repeating-linear-gradient(#3ae665 0 2px,#111 2px 4px) 0 42px/100% 30px no-repeat}

.ticker{display:flex;border-top:1px solid #3a3a3a;border-bottom:1px solid #3a3a3a;color:#ff5a5a;font-size:17px;line-height:24px}
.ticker>div{border-right:1px solid #3a3a3a;display:flex;align-items:center;justify-content:center}
.ticker>.idx{justify-content:space-between;padding:0 4px 0 13px;width:374px}
.ticker>.idx:nth-of-type(6){width:397px;padding:0 9px 0 8px}
.ticker>.idx:last-child{flex:1;border:0;padding-right:12px}
.ticker>.lab{width:37px;color:#a0a0a0;font-size:18px}
.ticker>.lab:nth-of-type(9){width:83px}
.ticker>.amt{width:94px;color:#00ffff;font-weight:700}
.ticker>.net{width:149px;gap:6px;font-size:17px}
.net b{font-weight:600}
.tri{display:flex;align-items:center;gap:10px}
.tri::before{content:"";border:6px solid transparent;border-bottom:12px solid #ff5a5a;border-top:0}
.cnt i{color:#ccc;border:solid #3a3a3a;border-width:0 1px;padding:0 2px;margin:0 4px}
.cnt em{color:#3ae665}

.status{display:flex;background:#222;position:relative;color:#a8a8a8;align-items:center}
.tools{display:flex;gap:13px;width:163px;padding-left:13px;border-right:1px solid #444;line-height:28px}
.tools button{display:flex;align-items:center;gap:1px}
.news{display:flex;align-items:center;flex:1;min-width:0;overflow:hidden;font-size:17px;color:#c0c0c0;padding-left:10px;line-height:28px}
.live{font-size:15px;width:85px}
.live a{text-decoration:underline;text-underline-offset:4px}
.cut{width:68px;overflow:hidden;display:flex;justify-content:flex-end;margin-right:33px}
.news time{width:59px;font-size:18px;color:#999}
.news .lead{margin-left:4px;width:348px}
.news .late{width:51px}
.alert{display:flex;align-items:center;width:241px;border:solid #444;border-width:0 1px;padding-left:7px;line-height:28px}
.alert a{color:#3ae665;font-size:17px;margin-left:20px;flex:1}
.alert button{margin-right:3px}
.sys{display:flex;align-items:center;gap:10px;width:341px;padding:0 4px 0 6px;font-size:17px;justify-content:space-between}
.find{width:99px;height:20px;border-radius:10px;background:#555;display:flex;align-items:center;padding-left:8px}
.find input{width:70px;background:none;border:0;outline:0;color:#ddd;padding:0}
.ime{position:absolute;left:632px;top:2px;width:224px;height:26px;background:#fff;border:1px solid #9cf;color:#0a6cd6;display:flex;align-items:center;justify-content:space-between;padding-right:5px}
.ime svg:first-child{margin:-8px 0 0 -4px}
.ime b{font-size:16px}

.taskbar{display:grid;grid-template-columns:1fr auto 1fr;background:#dcdbda;color:#222;align-items:center}
.weather{display:flex;align-items:center;gap:9px;padding-left:27px}
.weather span{color:#555}
.apps{display:flex;gap:7px;margin-right:40px}
.apps button{width:50px;height:50px;display:flex;align-items:center;justify-content:center;position:relative;border-radius:4px}
.run::after{content:"";position:absolute;bottom:1px;width:8px;height:4px;border-radius:2px;background:#777}
.apps .active{background:#e9e8e7}
.active::after{background:#0a78d4;width:12px}
.pdf{flex-direction:column;color:#fff;font-size:9px;font-weight:700;line-height:11px}
.pdf::before{content:"";position:absolute;width:30px;height:30px;border-radius:5px;background:#0bbd87}
.pdf svg,.pdf span{position:relative}
.tray{display:flex;align-items:center;justify-content:flex-end;gap:20px;padding-right:20px;line-height:20px}
.zh{font-size:19px;color:#888}
.net3{display:flex;gap:11px;margin:0 0 0 12px}
.clock{text-align:right}
.temp{text-align:center}
```
FILE: charts.js
```js
const BARS = 140, X0 = 48, STEP = 1277 / 139;
const CYAN = '#00ffff', BLUE = '#0000ff', GREEN = '#00ff00', RED = '#ff0000', YELLOW = '#ffff00', BROWN = '#a52a2a';

function pts(s) { return s.trim().split(/\s+/).map(p => p.split(',').map(Number)); }
function series(s) {
  const k = pts(s);
  return Array.from({length: BARS}, (_, i) => {
    const x = X0 + i * STEP;
    let j = 1;
    while (j < k.length - 1 && k[j][0] < x) j++;
    const [x1, y1] = k[j - 1], [x2, y2] = k[j];
    return y1 + (y2 - y1) * Math.max(0, Math.min(1, (x - x1) / (x2 - x1)));
  });
}
function ema(a, n) { let v = a[0]; const k = 2 / (n + 1); return a.map(c => v += (c - v) * k); }
function inside(x, r) { return r.some(([a, b]) => x >= a - 2 && x <= b + 2); }
let seed = 7;
function rnd() { seed = (seed * 16807) % 2147483647; return seed / 2147483647; }

/* Each pane works in its design coordinates and is fitted to the size the layout gives it. */
function pane(id, left, top, w, h) {
  const el = document.getElementById(id), W = el.clientWidth, H = el.clientHeight;
  let out = '';
  const X = x => ((x - left) * W / w).toFixed(1), Y = y => ((y - top) * H / h).toFixed(1);
  return {
    line(p, c, sw = 1, dash = '') { out += `<polyline points="${p.map(q => X(q[0]) + ',' + Y(q[1])).join(' ')}" fill="none" stroke="${c}" stroke-width="${sw}" stroke-dasharray="${dash}" stroke-linejoin="round"/>`; },
    rect(x, y, ww, hh, f, s = 'none', sw = 1) { out += `<rect x="${X(x)}" y="${Y(y)}" width="${ww * W / w}" height="${hh * H / h}" fill="${f}" stroke="${s}" stroke-width="${sw}"/>`; },
    dot(x, y, c) { out += `<ellipse cx="${X(x)}" cy="${Y(y)}" rx="3" ry="3" fill="${c}"/>`; },
    text(x, y, t, c, size = 16) { out += `<text x="${X(x)}" y="${Y(y)}" fill="${c}" font-size="${size}">${t}</text>`; },
    done() { el.innerHTML = out; }
  };
}
function runs(p, arr, colour, sw = 1) {
  let cur = null, acc = [];
  arr.forEach((y, i) => {
    const x = X0 + i * STEP, c = i ? colour(i, x) : colour(1, x);
    if (c !== cur) { if (acc.length > 1 && cur) p.line(acc, cur, sw); acc = acc.length ? [acc[acc.length - 1]] : []; cur = c; }
    acc.push([x, y]);
  });
  if (acc.length > 1 && cur) p.line(acc, cur, sw);
}
function grid(p, ys) { ys.forEach(y => p.line([[44, y + .5], [1340, y + .5]], '#666', 1, '1 4')); }
function ribbon(p, a, b, n, colour) {
  for (let k = 0; k < n; k++) runs(p, a.map((v, i) => v + (b[i] - v) * Math.pow(k / (n - 1), .85)), colour);
}
function markers(p, m, upDot, upStem, dnDot, dnStem, f) {
  m.forEach((y, i) => {
    const x = X0 + i * STEP, d = (m[Math.min(i + 1, BARS - 1)] - m[Math.max(i - 1, 0)]) / 2;
    const n = Math.min(20, Math.abs(d) * f);
    if (d < -.1) { p.rect(x - 1.5, y, 3, n + 3, upStem); p.dot(x, y, upDot); }
    else { p.rect(x - 1.5, y - n, 3, n, dnStem); p.dot(x, y, dnDot); }
  });
}

function drawPrice() {
  const p = pane('plot-price', 43, 129, 1297, 329);
  const close = series('48,208 58,210 67,214 76,205 86,203 95,210 104,206 112,215 121,210 131,202 140,222 149,210 158,209 167,202 185,205 204,203 213,200 222,199 231,192 240,208 249,211 258,210 268,210 277,202 286,198 295,192 304,175 313,172 322,180 331,186 341,192 350,198 359,202 368,205 377,202 386,209 395,221 404,246 413,246 422,226 431,218 440,205 449,175 458,172 467,174 477,180 486,178 496,177 504,192 513,206 523,196 532,191 541,193 551,196 560,201 578,205 586,234 595,216 604,228 614,251 623,251 631,264 640,296 649,316 658,307 668,262 677,284 686,302 695,297 706,290 715,275 723,260 732,272 742,277 751,280 770,282 787,285 796,260 805,243 814,262 823,268 833,288 842,302 852,306 870,311 879,310 887,322 896,309 905,322 914,326 925,333 933,334 942,318 951,321 960,330 970,350 979,368 988,388 997,402 1006,393 1015,400 1024,397 1033,373 1042,392 1052,393 1060,390 1070,394 1079,397 1088,430 1098,424 1107,418 1116,390 1124,408 1134,386 1143,386 1152,358 1161,345 1170,357 1180,350 1189,346 1198,335 1207,344 1216,362 1226,350 1235,348 1253,351 1262,355 1271,374 1280,398 1289,424 1298,422 1307,416 1316,390 1325,404');
  const top = series('48,158 69,162 104,169 165,178 217,183 299,187 373,188 412,192 434,195 494,193 538,194 585,197 629,203 680,217 712,226 768,235 825,241 877,253 938,267 981,278 1029,297 1076,311 1111,325 1146,333 1202,335 1267,338 1302,347 1325,351');
  const bot = series('48,184 86,192 130,197 200,199 260,201 330,198 380,195 420,204 450,207 500,200 560,198 610,208 650,225 680,236 700,248 740,252 790,262 825,257 860,270 900,280 940,293 980,305 1020,327 1060,347 1100,365 1130,371 1160,368 1200,360 1260,355 1290,365 1325,377');
  const mark = series('48,194 67,197 95,199 121,203 150,206 165,207 200,204 231,203 258,205 280,204 300,200 331,195 350,197 380,198 410,207 428,209 445,204 470,199 500,195 530,194 580,198 604,204 623,214 640,224 650,233 668,244 680,249 712,258 750,263 785,270 805,266 830,268 850,275 880,283 905,291 930,300 960,306 985,320 1005,336 1030,346 1060,360 1080,365 1100,378 1115,381 1130,384 1150,380 1180,374 1210,366 1240,363 1265,359 1275,365 1300,374 1325,381');
  grid(p, [185, 233, 281, 330, 378, 427]);
  p.text(113, 185, '菲尔泰勒金融工作室', RED);
  seed = 7;
  ribbon(p, top, bot, 6, () => CYAN);
  close.forEach((c, i) => {
    const x = X0 + i * STEP, o = i ? close[i - 1] : c + 3, down = c >= o;
    const a = Math.min(o, c), b = Math.max(a + 2, Math.max(o, c)), col = down ? CYAN : '#ff5a5a';
    let hi = a - rnd() * 9, lo = b + rnd() * 9;
    if (Math.abs(x - 495) < 5) hi = 162;
    if (Math.abs(x - 649) < 5) lo = 328;
    if (Math.abs(x - 586) < 5) lo = 255;
    if (Math.abs(x - 1098) < 5) lo = 438;
    p.line([[x, hi], [x, a]], col); p.line([[x, b], [x, lo]], col);
    if (down) p.rect(x - 3.5, a, 7, b - a, CYAN); else p.rect(x - 2.5, a, 6, b - a, '#060606', '#ff5a5a');
  });
  [3, 5, 7, 9, 11, 13, 16].forEach((n, k) => {
    const e = ema(close, n);
    runs(p, e, i => e[i] > mark[i] + 4 ? GREEN : e[i] < mark[i] - 3 && e[i] <= e[i - 1] + .3 ? (k % 3 ? RED : '#fff') : k > 3 && e[i] < e[i - 1] ? YELLOW : BLUE);
  });
  runs(p, close, i => close[i] > close[i - 1] ? BLUE : null);
  const ups = [[158, 168], [295, 313], [413, 458], [658, 668], [690, 723], [787, 805], [925, 945], [1024, 1033], [1098, 1120], [1140, 1161], [1185, 1198], [1298, 1316]];
  runs(p, close, (i, x) => inside(x, ups) ? '#fff' : null, 3);
  runs(p, ema(close, 7), (i, x) => inside(x, [[300, 331], [440, 495], [730, 745], [1145, 1216]]) ? '#fff' : null, 3);
  runs(p, ema(close, 9), (i, x) => inside(x, [[85, 110], [165, 225], [315, 331], [470, 495], [715, 760], [1135, 1155], [1216, 1262]]) ? YELLOW : null, 2);
  [[60, 68], [103, 121], [140, 156]].forEach(([a, b]) => p.rect(a, 208, b - a, 6, GREEN));
  markers(p, mark, YELLOW, '#fff', BLUE, BLUE, 3);
  p.line([[514, 170], [499, 163], [506, 163]], '#fff'); p.line([[499, 163], [503, 168]], '#fff');
  p.text(516, 178, '1.1495', '#fff', 15);
  p.line([[1117, 433], [1100, 440], [1108, 440]], '#fff'); p.line([[1100, 440], [1106, 435]], '#fff');
  p.text(1118, 432, '1.0351', '#fff', 15);
  p.done();
}

function drawMain() {
  const p = pane('plot-main', 43, 487, 1297, 214);
  const v = series('48,653 65,658 76,652 85,655 95,648 104,652 121,655 130,642 140,660 157,660 168,625 175,612 186,602 193,575 203,568 212,543 222,543 231,518 240,550 250,571 258,569 267,580 276,546 286,550 295,526 304,508 313,503 322,518 331,533 340,572 350,590 359,608 368,604 377,612 386,627 395,662 404,682 413,687 422,664 437,624 449,560 458,527 468,516 477,517 495,517 505,545 514,567 532,558 545,563 560,580 577,590 586,622 595,616 604,630 613,659 623,665 632,680 649,689 660,684 668,655 679,651 688,660 705,661 717,635 727,627 733,627 745,632 760,637 787,637 797,615 805,593 815,598 824,607 833,628 842,646 852,657 865,667 878,667 887,680 896,668 906,668 920,683 934,688 944,674 955,674 965,688 978,699 990,697 1006,692 1024,694 1033,677 1042,680 1060,680 1078,682 1090,692 1098,694 1108,680 1115,658 1124,661 1134,640 1143,634 1152,605 1161,579 1170,579 1180,570 1189,562 1197,550 1207,554 1216,570 1226,546 1235,536 1250,526 1261,519 1270,540 1279,570 1288,625 1297,651 1307,654 1316,629 1325,631');
  const top = series('48,656 90,657 158,656 185,648 204,641 231,621 270,610 300,592 331,578 360,579 400,592 430,607 445,612 465,606 500,587 550,574 585,576 610,586 640,604 670,612 720,618 797,620 825,616 860,623 920,634 980,646 1040,653 1100,659 1124,658 1160,655 1205,630 1240,610 1262,598 1280,596 1300,600 1325,608');
  const bot = series('48,662 150,661 204,646 250,634 290,626 330,605 380,604 425,614 450,613 500,604 540,593 600,592 640,612 668,618 700,626 750,630 800,630 830,628 880,638 930,655 980,668 1040,674 1100,677 1140,668 1205,641 1262,618 1325,621');
  const mark = series('48,667 67,666 95,662 130,656 158,656 176,649 195,632 213,614 231,592 249,584 267,581 280,576 304,557 322,547 331,545 340,549 360,562 377,573 395,591 413,614 430,622 450,610 468,589 486,568 504,561 520,562 545,561 577,570 604,590 623,607 649,634 665,642 705,649 727,643 745,640 787,638 805,625 825,622 842,629 870,643 896,652 930,663 965,668 1005,678 1024,682 1060,683 1098,689 1124,679 1145,668 1161,648 1180,628 1197,610 1226,588 1250,567 1270,560 1279,563 1297,583 1325,602');
  grid(p, [488, 531, 573, 615, 657, 699]);
  p.line([[48, 488.5], [1088, 488.5], [1093, 615]], BLUE, 1, '4 3'); p.line([[1098, 697], [1325, 697]], BLUE, 1, '4 3');
  p.text(50, 507, '用到未来函数　?', '#808080', 14);
  p.text(113, 511, '菲尔泰勒金融工作室', RED);
  p.text(1326, 512, '顶', RED, 14); p.text(1326, 698, '低', GREEN, 14);
  p.line([[48, 522.5], [1325, 522.5]], '#b4dc28', 1.5);
  p.line([[48, 592.5], [1325, 592.5]], YELLOW, 1, '4 3');
  p.line([[48, 662.5], [1325, 662.5]], '#fff', 1.5);
  ribbon(p, top, bot, 6, (i, x) => x < 158 ? CYAN : x < 204 ? YELLOW : x < 613 ? BROWN : x < 668 ? YELLOW : x < 1165 ? CYAN : x < 1205 ? YELLOW : BROWN);
  for (let k = 1; k < 7; k++) {
    const f = ema(v, 1 + k * 1.3).map((y, i) => y + (mark[i] - y) * Math.pow(k / 6, 1.3));
    runs(p, f, i => f[i] < f[i - 1] - .2 ? RED : mark[i] > top[i] + 6 && v[i] > mark[i] - 6 ? GREEN : BLUE);
  }
  runs(p, v, () => '#fff');
  runs(p, v, (i, x) => i % 2 && v[i] > v[i - 1] + 4 ? GREEN : null);
  markers(p, mark, RED, '#fff', GREEN, BLUE, 2.2);
  const ups = [[122, 131], [158, 231], [295, 313], [422, 468], [658, 668], [705, 733], [787, 805], [1024, 1033], [1098, 1116], [1125, 1143], [1143, 1197], [1226, 1261]];
  runs(p, v, (i, x) => inside(x - STEP / 2, ups) ? RED : null, 6);
  p.done();
}

function drawValue() {
  const p = pane('plot-value', 43, 730, 1297, 153);
  const v = series('48,850 60,852 76,850 95,853 112,865 121,862 130,854 140,865 158,864 168,848 176,835 186,829 195,811 203,805 212,788 222,787 231,767 240,795 249,818 268,834 277,805 286,806 295,782 304,765 313,755 322,765 331,771 341,800 359,838 368,839 386,855 395,871 413,874 422,862 437,830 449,790 458,770 468,758 486,754 495,754 505,775 523,790 532,800 545,830 560,845 577,857 586,854 596,840 604,842 614,854 632,866 649,873 658,872 668,855 676,850 705,856 715,840 733,833 745,842 770,855 787,862 797,845 806,835 824,840 842,868 865,877 887,878 896,870 924,866 940,867 952,862 965,868 978,880 1020,880 1033,871 1060,873 1098,878 1115,858 1124,857 1134,843 1143,837 1152,815 1161,804 1170,801 1180,793 1197,784 1207,790 1216,800 1226,789 1234,788 1243,800 1262,803 1270,835 1280,857 1297,872 1307,866 1316,846 1325,841');
  const top = series('48,854 180,857 204,848 240,835 270,833 300,822 325,812 360,811 400,823 437,832 465,820 500,808 550,807 590,820 620,826 665,831 720,835 797,838 860,847 950,855 1050,860 1124,862 1170,853 1200,840 1262,825 1325,838');
  const bot = series('48,860 170,859 204,851 260,842 310,835 350,826 390,829 440,834 500,819 560,818 600,825 670,840 800,844 860,855 950,864 1050,870 1124,871 1195,850 1262,833 1325,842');
  const mark = series('48,861 100,858 150,860 168,859 185,854 213,841 231,828 250,826 268,827 286,823 304,814 331,802 350,804 386,815 413,830 437,833 458,824 486,806 504,799 530,800 560,808 585,818 620,829 658,842 700,846 733,843 800,846 830,846 860,853 900,860 950,863 1020,869 1060,870 1110,872 1140,865 1160,855 1189,837 1216,826 1243,818 1262,815 1280,822 1300,830 1325,834');
  grid(p, [782, 831, 880]);
  p.line([[48, 731.5], [1088, 731.5], [1094, 822]], '#fff', 1, '4 3'); p.line([[1096, 855], [1098, 881.5], [1325, 881.5]], '#fff', 1, '4 3');
  p.text(50, 750, '用到未来函数　?', '#808080', 14);
  p.line([[48, 739.5], [1325, 739.5]], '#ff00ff', 1.5);
  p.line([[48, 806.5], [1325, 806.5]], YELLOW, 1, '4 3');
  p.line([[48, 872.5], [1325, 872.5]], GREEN, 1.5);
  ribbon(p, top, bot, 6, (i, x) => x < 170 ? CYAN : x < 195 ? YELLOW : x < 595 ? BROWN : x < 655 ? YELLOW : x < 1150 ? CYAN : x < 1190 ? YELLOW : BROWN);
  for (let k = 1; k < 7; k++) {
    const f = ema(v, 1 + k * 1.1).map((y, i) => y + (mark[i] - y) * Math.pow(k / 7, 1.3));
    runs(p, f, i => f[i] < f[i - 1] - .2 ? (k === 2 ? YELLOW : RED) : mark[i] > top[i] + 2 && v[i] > mark[i] ? GREEN : k < 3 ? BLUE : null, 1);
    if (k === 4) runs(p, f, i => f[i] < f[i - 1] - 1.5 ? RED : null, 3);
  }
  runs(p, v, i => i % 3 ? GREEN : BLUE);
  const ups = [[158, 213], [297, 313], [413, 486], [586, 598], [658, 678], [705, 733], [787, 806], [890, 900], [1098, 1116], [1125, 1197], [1220, 1234], [1298, 1325]];
  runs(p, v, (i, x) => inside(x - STEP / 2, ups) ? RED : null, 3);
  markers(p, mark, YELLOW, '#fff', BLUE, BLUE, 2.6);
  p.done();
}

function drawMarks() {
  const p = pane('marks', 43, 69, 1370, 866);
  p.rect(525, 196, 139, 614, 'none', YELLOW, 3);
  p.rect(844, 230, 252, 621, 'none', YELLOW, 3);
  p.done();
}

function drawMini() {
  const p = pane('plot-mini', 1486, 630, 146, 278);
  for (let x = 1492; x < 1630; x += 6) p.line([[x, 657], [x, 904]], '#333', 1, '1 3');
  for (let k = 0; k < 7; k++) p.line([[1486, 657.5 + k * 22.2], [1630.5, 657.5 + k * 22.2]], k === 3 ? '#444' : '#2c2c2c', k === 3 ? 2 : 1);
  [[657, 133], [806, 27], [834, 34], [869, 35]].forEach(([y, h]) => p.rect(1486.5, y + .5, 144, h, 'none', '#333'));
  const k = pts('1486,725 1493,720 1496,726 1504,727 1510,733 1520,737 1527,743 1537,739 1541,744 1546,757 1550,740 1556,753 1560,739 1565,744 1572,743 1575,751 1578,768 1581,755 1586,765 1589,767 1592,788 1595,774 1603,777 1607,774 1611,761 1614,757 1620,762 1630,757');
  seed = 11;
  const path = [];
  for (let x = 1486; x <= 1630; x++) {
    let j = 1; while (j < k.length - 1 && k[j][0] < x) j++;
    const t = (x - k[j - 1][0]) / (k[j][0] - k[j - 1][0]);
    path.push([x, k[j - 1][1] + (k[j][1] - k[j - 1][1]) * t + rnd() * 5 - 2.5]);
  }
  p.line(path, '#fff', 1.5);
  const sig = [], sig2 = [];
  for (let x = 1487; x < 1630; x++) {
    const tick = rnd() > .9 ? 2 : 0, late = x < 1491 ? 4 : 0;
    p.rect(x, 822 - tick + late, 1.2, 10 + tick - late, '#f5f5a0');
    const amp = x > 1540 && x < 1600 ? 11 : 4, d = Math.sin(x / 5) * amp * rnd();
    p.rect(x, d > 0 ? 850 - d : 850, 1.2, Math.abs(d), d > 0 ? '#ff5a5a' : CYAN);
    sig.push([x, 851 - Math.sin(x / 4.5) * amp * (.4 + rnd() * .6)]); sig2.push([x, 850 - Math.sin(x / 4.5 - .4) * amp * .7]);
    p.rect(x, 871 + rnd() * 12, 1.4, 17 + rnd() * 14, '#ff00ff');
    if (x % 17 === 0) p.rect(x, 880, 1, 10, YELLOW);
  }
  p.rect(1590, 807, 1, 18, '#f5f5a0');
  p.line(sig2, '#fff'); p.line(sig, YELLOW, 1.3);
  p.done();
}

function drawAll() { drawPrice(); drawMain(); drawValue(); drawMarks(); drawMini(); }
drawAll();
addEventListener('resize', drawAll);
```
